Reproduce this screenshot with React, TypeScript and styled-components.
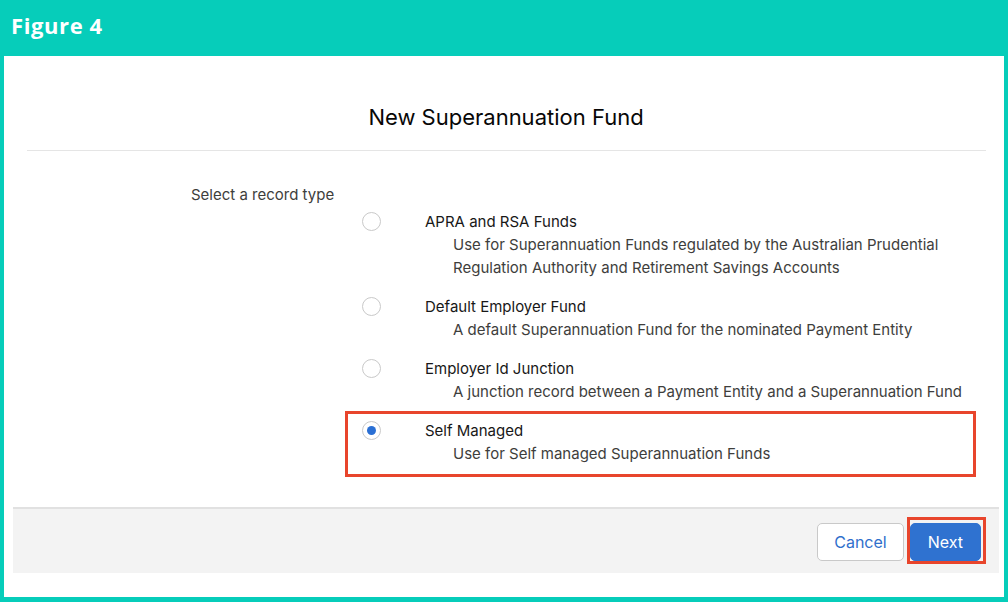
import React from "react"
import styled, { createGlobalStyle } from "styled-components"

type RecordType = {
  name: string
  description: string[]
  selected?: boolean
}

const recordTypes: RecordType[] = [
  {
    name: "APRA and RSA Funds",
    description: [
      "Use for Superannuation Funds regulated by the Australian Prudential",
      "Regulation Authority and Retirement Savings Accounts",
    ],
  },
  {
    name: "Default Employer Fund",
    description: ["A default Superannuation Fund for the nominated Payment Entity"],
  },
  {
    name: "Employer Id Junction",
    description: ["A junction record between a Payment Entity and a Superannuation Fund"],
  },
  {
    name: "Self Managed",
    description: ["Use for Self managed Superannuation Funds"],
    selected: true,
  },
]

const teal = "#06cdba"
const annotation = "#e8452c"
const uiFont = `Inter, "Open Sans", "Liberation Sans", sans-serif`

const GlobalStyle = createGlobalStyle`
  html, body {
    margin: 0;
    padding: 0;
    background: ${teal};
  }
  body {
    width: 1008px;
    height: 602px;
    overflow: hidden;
    font-family: ${uiFont};
  }
`

let Root = styled.div`
  display: flex;
  flex-direction: column;
  width: 1008px;
  height: 602px;
  background: ${teal};
`

let FigureBar = styled.div`
  height: 56px;
  display: flex;
  align-items: center;
  padding-left: 11px;
  box-sizing: border-box;
`

let FigureTitle = styled.h1`
  margin: 0;
  font-family: "Open Sans", Lato, sans-serif;
  font-weight: 700;
  font-size: 22px;
  letter-spacing: 0.6px;
  color: #ffffff;
  margin-top: -6px;
`

let Panel = styled.div`
  margin: 0 4px 5px 4px;
  height: 541px;
  background: #ffffff;
  padding: 18px 5px 0 9px;
  box-sizing: border-box;
`

let Modal = styled.div`
  display: flex;
  flex-direction: column;
`

let ModalHeader = styled.div`
  padding: 26px 14px 16px;
  display: flex;
  justify-content: center;
`

let ModalTitle = styled.h2`
  margin: 0;
  font-weight: 400;
  font-size: 22px;
  line-height: 34px;
  color: #080707;
`

let Divider = styled.div`
  height: 1px;
  margin: 0 13px 0 14px;
  background: #e5e5e5;
`

let ModalBody = styled.div`
  display: grid;
  grid-template-columns: 154px 1fr;
  padding: 32px 0 30px 178px;
`

let FieldLabel = styled.div`
  font-size: 15px;
  line-height: 23px;
  color: #3e3e3c;
  white-space: nowrap;
`

let OptionList = styled.div`
  display: flex;
  flex-direction: column;
  margin-top: 19px;
  width: 631px;
`

let OptionRow = styled.label<{ $highlighted?: boolean }>`
  position: relative;
  display: flex;
  align-items: flex-start;
  padding: 8px 0 ${p => (p.$highlighted ? 12 : 8)}px 17px;

  ${p =>
    p.$highlighted &&
    `
    &::after {
      content: "";
      position: absolute;
      inset: 0;
      border: 3px solid ${annotation};
      pointer-events: none;
    }
  `}
`

let Radio = styled.span<{ $checked?: boolean }>`
  flex: none;
  width: 19px;
  height: 19px;
  margin-top: 2px;
  border-radius: 50%;
  border: 1px solid #c9c9c9;
  box-sizing: border-box;
  background: #ffffff;
  display: flex;
  align-items: center;
  justify-content: center;

  &::after {
    content: "";
    width: 9px;
    height: 9px;
    border-radius: 50%;
    background: ${p => (p.$checked ? "#2a6fd4" : "transparent")};
  }
`

let OptionText = styled.div`
  margin-left: 44px;
  display: flex;
  flex-direction: column;
  font-size: 15px;
  line-height: 23px;
  color: #181818;
  white-space: nowrap;
`

let OptionName = styled.span``

let OptionDescription = styled.span`
  padding-left: 28px;
  color: #3e3e3c;
`

let ModalFooter = styled.div`
  display: flex;
  justify-content: flex-end;
  align-items: center;
  gap: 6px;
  background: #f3f3f3;
  border-top: 2px solid #e1e1e1;
  padding: 14px 18px 12px;
`

let Button = styled.button<{ $brand?: boolean }>`
  height: 38px;
  padding: 0 ${p => (p.$brand ? 17 : 16)}px;
  border-radius: 5px;
  font-family: ${uiFont};
  font-size: 16px;
  cursor: pointer;
  border: 1px solid ${p => (p.$brand ? "#2f72d0" : "#c9c9c9")};
  background: ${p => (p.$brand ? "#2f72d0" : "#ffffff")};
  color: ${p => (p.$brand ? "#ffffff" : "#2f6fcc")};
`

let Highlight = styled.span`
  position: relative;
  display: flex;

  &::after {
    content: "";
    position: absolute;
    top: -6px;
    left: -3px;
    right: -5px;
    bottom: -3px;
    border: 3px solid ${annotation};
    pointer-events: none;
  }
`

export default function App() {
  return (
    <Root>
      <GlobalStyle />
      <FigureBar>
        <FigureTitle>Figure 4</FigureTitle>
      </FigureBar>
      <Panel>
        <Modal>
          <ModalHeader>
            <ModalTitle>New Superannuation Fund</ModalTitle>
          </ModalHeader>
          <Divider />
          <ModalBody>
            <FieldLabel>Select a record type</FieldLabel>
            <OptionList>
              {recordTypes.map(rt => (
                <OptionRow key={rt.name} $highlighted={rt.selected}>
                  <Radio $checked={rt.selected} />
                  <OptionText>
                    <OptionName>{rt.name}</OptionName>
                    {rt.description.map(line => (
                      <OptionDescription key={line}>{line}</OptionDescription>
                    ))}
                  </OptionText>
                </OptionRow>
              ))}
            </OptionList>
          </ModalBody>
          <ModalFooter>
            <Button>Cancel</Button>
            <Highlight>
              <Button $brand>Next</Button>
            </Highlight>
          </ModalFooter>
        </Modal>
      </Panel>
    </Root>
  )
}
